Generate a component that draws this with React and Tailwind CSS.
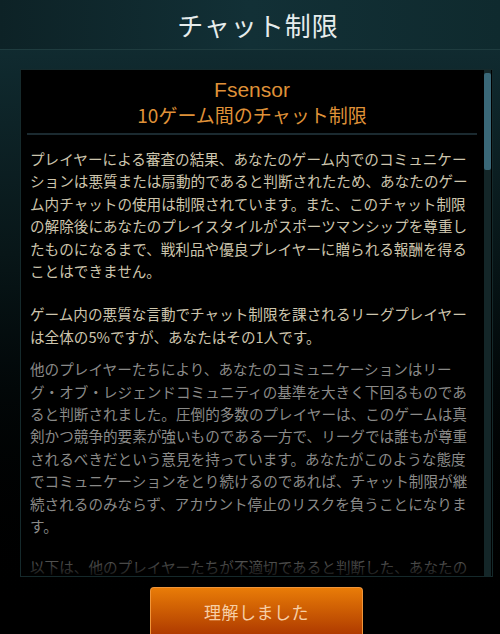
const JP = "font-['Noto_Sans_CJK_JP','Noto_Sans',sans-serif]";

export default function App() {
  return (
    <div className={`w-[500px] h-[634px] overflow-hidden flex flex-col bg-gradient-to-b from-[#123036] via-[#081618] via-40% to-black ${JP}`}>
      {/* タイトル */}
      <div className="h-[50px] shrink-0 flex items-center justify-center border-b border-[#1f3c3f] bg-gradient-to-r from-[#0d2226] via-[#123036] to-[#0f2a2e]">
        <h1 className="text-[26px] leading-none text-[#e6ecec] pl-[16px] tracking-[1px]">チャット制限</h1>
      </div>

      {/* 本文パネル */}
      <div className="mt-[19px] ml-[20px] w-[473px] h-[508px] shrink-0 flex border border-[#15292b] bg-black">
        <div className="relative flex-1 overflow-hidden pl-[6px] pr-[7px] pt-[7px]">
          <div className="text-center text-[#df9138] border-b-2 border-[#1b2a30] pb-[6px]">
            <div className="text-[21px] leading-[25px] font-['Liberation_Sans','Noto_Sans_CJK_JP',sans-serif]">Fsensor</div>
            <div className="text-[19px] leading-[25px]">10ゲーム間のチャット制限</div>
          </div>

          <div className="pl-[3px] pt-[13px] w-[443px] text-[14.6px] leading-[22.4px]">
            <p className="text-[#cdc5ad] mb-[21px]">
              プレイヤーによる審査の結果、あなたのゲーム内でのコミュニケーションは悪質または扇動的であると判断されたため、あなたのゲーム内チャットの使用は制限されています。また、このチャット制限の解除後にあなたのプレイスタイルがスポーツマンシップを尊重したものになるまで、戦利品や優良プレイヤーに贈られる報酬を得ることはできません。
            </p>
            <p className="text-[#cdc5ad] mb-[10px]">
              ゲーム内の悪質な言動でチャット制限を課されるリーグプレイヤーは全体の5%ですが、あなたはその1人です。
            </p>
            <p className="text-[#8a8a88] mb-[18px]">
              他のプレイヤーたちにより、あなたのコミュニケーションはリーグ・オブ・レジェンドコミュニティの基準を大きく下回るものであると判断されました。圧倒的多数のプレイヤーは、このゲームは真剣かつ競争的要素が強いものである一方で、リーグでは誰もが尊重されるべきだという意見を持っています。あなたがこのような態度でコミュニケーションをとり続けるのであれば、チャット制限が継続されるのみならず、アカウント停止のリスクを負うことになります。
            </p>
            <p className="text-[#8a8a88]">
              以下は、他のプレイヤーたちが不適切であると判断した、あなたのチャットの一例です。
            </p>
          </div>

          {/* 下端のフェード */}
          <div className="absolute left-0 right-0 bottom-0 h-[28px] bg-gradient-to-b from-transparent to-black/85" />
        </div>

        {/* スクロールバー */}
        <div className="w-[7px] shrink-0 bg-[#142628] pt-[3px] mr-[1px]">
          <div className="h-[97px] w-full rounded-[2px] bg-[#3a6878]" />
        </div>
      </div>

      {/* ボタン */}
      <div className="mt-[10px] flex justify-center pl-[13px]">
        <button className="w-[213px] h-[52px] rounded-t-[4px] border border-[#f0953a] border-b-0 bg-gradient-to-b from-[#e97c08] to-[#a93300] text-[#f7cfa6] text-[17px] pb-[4px] tracking-[0.5px]">
          理解しました
        </button>
      </div>
    </div>
  );
}
